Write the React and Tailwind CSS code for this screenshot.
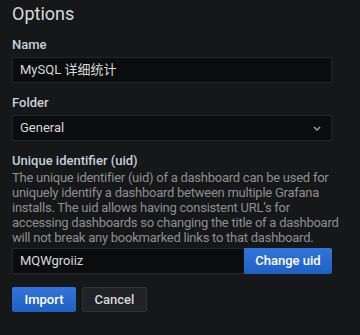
import React from "react";

const Label = ({ children }) => (
  <div className="text-[13px] font-medium leading-[16px] text-[#c7d0d9]">{children}</div>
);

export default function App() {
  return (
    <div
      className="min-h-[335px] w-[360px] bg-[#161719] pt-[3px]"
      style={{ fontFamily: "Roboto, 'Noto Sans CJK SC', sans-serif" }}
    >
      <div className="ml-3 w-[320px]">
        <h2 className="text-[18px] leading-[22px] text-[#d8d9da]">Options</h2>

        <div className="mt-[12px]">
          <Label>Name</Label>
          <div className="mt-[4px] flex h-[26px] items-center rounded-[2px] border border-[#24272b] bg-[#0b0c0e] px-[7px] text-[13px] text-[#d8d9da]">
            MySQL 详细统计
          </div>
        </div>

        <div className="mt-[12px]">
          <Label>Folder</Label>
          <div className="mt-[4px] flex h-[26px] items-center justify-between rounded-[2px] border border-[#24272b] bg-[#0b0c0e] px-[7px] text-[13px] text-[#d8d9da]">
            <span>General</span>
            <svg width="8" height="5" viewBox="0 0 8 5" className="mr-[3px]">
              <path d="M1 1l3 3 3-3" fill="none" stroke="#9fa7b3" strokeWidth="1.3" />
            </svg>
          </div>
        </div>

        <div className="mt-[12px]">
          <Label>Unique identifier (uid)</Label>
          <p className="mt-[1px] whitespace-nowrap text-[13px] leading-[15px] tracking-[-0.25px] text-[#8e8e8e]">
            The unique identifier (uid) of a dashboard can be used for
            <br />
            uniquely identify a dashboard between multiple Grafana
            <br />
            installs. The uid allows having consistent URL’s for
            <br />
            accessing dashboards so changing the title of a dashboard
            <br />
            will not break any bookmarked links to that dashboard.
          </p>
          <div className="mt-[3px] flex h-[26px]">
            <div className="flex flex-1 items-center rounded-l-[2px] border border-r-0 border-[#24272b] bg-[#0b0c0e] px-[7px] text-[13px] text-[#d8d9da]">
              MQWgroiiz
            </div>
            <button className="w-[88px] rounded-r-[2px] bg-gradient-to-b from-[#3274d9] to-[#1f60c4] text-[13px] font-medium text-white">
              Change uid
            </button>
          </div>
        </div>

        <div className="mt-[13px] flex gap-[6px]">
          <button className="h-[25px] w-[64px] rounded-[2px] bg-gradient-to-b from-[#3274d9] to-[#1f60c4] text-[13px] font-medium text-white">
            Import
          </button>
          <button className="h-[25px] w-[65px] rounded-[2px] border border-[#2c3235] bg-[#202226] text-[13px] font-medium text-[#d8d9da]">
            Cancel
          </button>
        </div>
      </div>
    </div>
  );
}
